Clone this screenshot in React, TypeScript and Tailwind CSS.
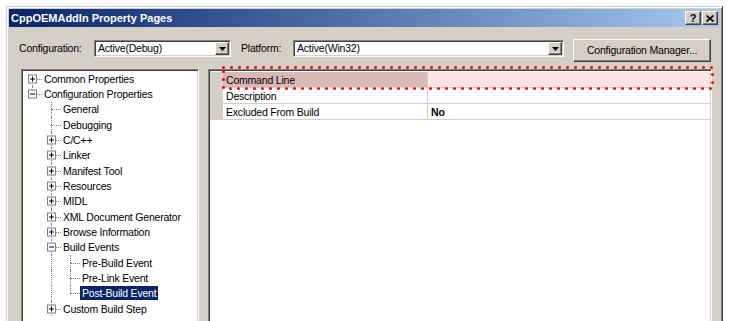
import React from 'react';

type TreeItem = {
  label: string;
  level: number;
  box?: 'plus' | 'minus';
  hasNext: boolean;
  first?: boolean;
  guides: boolean[];
  selected?: boolean;
};

const treeItems: TreeItem[] = [
  { label: 'Common Properties', level: 0, box: 'plus', hasNext: true, first: true, guides: [] },
  { label: 'Configuration Properties', level: 0, box: 'minus', hasNext: false, guides: [] },
  { label: 'General', level: 1, hasNext: true, guides: [false] },
  { label: 'Debugging', level: 1, hasNext: true, guides: [false] },
  { label: 'C/C++', level: 1, box: 'plus', hasNext: true, guides: [false] },
  { label: 'Linker', level: 1, box: 'plus', hasNext: true, guides: [false] },
  { label: 'Manifest Tool', level: 1, box: 'plus', hasNext: true, guides: [false] },
  { label: 'Resources', level: 1, box: 'plus', hasNext: true, guides: [false] },
  { label: 'MIDL', level: 1, box: 'plus', hasNext: true, guides: [false] },
  { label: 'XML Document Generator', level: 1, box: 'plus', hasNext: true, guides: [false] },
  { label: 'Browse Information', level: 1, box: 'plus', hasNext: true, guides: [false] },
  { label: 'Build Events', level: 1, box: 'minus', hasNext: true, guides: [false] },
  { label: 'Pre-Build Event', level: 2, hasNext: true, guides: [false, true] },
  { label: 'Pre-Link Event', level: 2, hasNext: true, guides: [false, true] },
  { label: 'Post-Build Event', level: 2, hasNext: false, guides: [false, true], selected: true },
  { label: 'Custom Build Step', level: 1, box: 'plus', hasNext: true, guides: [false] },
];

const sunken =
  'border border-t-[#808080] border-l-[#808080] border-r-white border-b-white shadow-[inset_1px_1px_0_#404040,inset_-1px_-1px_0_#d4d0c8]';
const raised =
  'border border-t-white border-l-white border-r-[#404040] border-b-[#404040] shadow-[inset_-1px_-1px_0_#808080]';

function ExpandBox({ kind }: { kind: 'plus' | 'minus' }) {
  return (
    <div className="absolute left-[5px] top-1/2 -translate-y-1/2 w-[9px] h-[9px] border border-[#808080] bg-white">
      <div className="absolute left-[1px] top-[3px] w-[5px] h-[1px] bg-black" />
      {kind === 'plus' && <div className="absolute left-[3px] top-[1px] w-[1px] h-[5px] bg-black" />}
    </div>
  );
}

function TreeRow({ item }: { item: TreeItem }) {
  return (
    <div className="flex items-center h-[15.33px]">
      {item.guides.map((g, i) => (
        <div key={i} className="relative w-[19px] h-full shrink-0">
          {g && <div className="absolute left-[9px] top-0 bottom-0 border-l border-dotted border-[#808080]" />}
        </div>
      ))}
      <div className="relative w-[19px] h-full shrink-0">
        {!item.first && <div className="absolute left-[9px] top-0 h-1/2 border-l border-dotted border-[#808080]" />}
        {item.hasNext && <div className="absolute left-[9px] top-1/2 bottom-0 border-l border-dotted border-[#808080]" />}
        <div className="absolute left-[9px] right-0 top-1/2 border-t border-dotted border-[#808080]" />
        {item.box && <ExpandBox kind={item.box} />}
      </div>
      <span
        className={
          'px-[2px] h-[14px] leading-[14px] whitespace-nowrap ' +
          (item.selected ? 'bg-[#0a246a] text-white' : 'text-black')
        }
      >
        {item.label}
      </span>
    </div>
  );
}

function Combo({ value, width }: { value: string; width: string }) {
  return (
    <div className={`${sunken} ${width} h-[17px] bg-white flex items-stretch p-[1px]`}>
      <div className="flex-1 pl-[2px] leading-[13px] text-black">{value}</div>
      <div className={`${raised} w-[14px] bg-[#d4d0c8] flex items-center justify-center`}>
        <svg width="7" height="4" viewBox="0 0 7 4">
          <path d="M0 0h7L3.5 4z" fill="#000" />
        </svg>
      </div>
    </div>
  );
}

function PropRow({ name, value, highlight, bold }: { name: string; value?: string; highlight?: boolean; bold?: boolean }) {
  return (
    <div className="flex h-[16px]">
      <div className="w-[13px] bg-[#d4d0c8] shrink-0" />
      <div
        className={
          'w-[205px] shrink-0 pl-[3px] leading-[16px] border-b border-r border-[#d4d0c8] ' +
          (highlight ? 'bg-[#d9b9b5]' : 'bg-white')
        }
      >
        {name}
      </div>
      <div
        className={
          'flex-1 pl-[3px] leading-[16px] border-b border-[#d4d0c8] ' +
          (highlight ? 'bg-[#ffe4e4]' : 'bg-white') +
          (bold ? ' font-bold' : '')
        }
      >
        {value}
      </div>
    </div>
  );
}

export default function App() {
  return (
    <div
      className="h-[321px] w-[729px] overflow-hidden bg-white text-[10.5px] tracking-[-0.2px] text-black"
      style={{ fontFamily: '"Liberation Sans", Arial, sans-serif' }}
    >
      <div className="ml-[6px] mt-[6px] w-[717px] h-[340px] bg-[#d4d0c8] p-[2px] border border-t-[#d4d0c8] border-l-[#d4d0c8] border-r-[#404040] border-b-[#404040] shadow-[inset_1px_1px_0_white,inset_-1px_-1px_0_#808080]">
        {/* title bar */}
        <div className="h-[18px] bg-linear-to-r from-[#0a246a] to-[#a6caf0] flex items-center pl-[2px] pr-[2px]">
          <span className="flex-1 font-bold text-white text-[11px] tracking-normal">CppOEMAddIn Property Pages</span>
          <div className="flex gap-[1px]">
            <div className={`${raised} w-[16px] h-[14px] bg-[#d4d0c8] flex items-center justify-center font-bold text-[11px] leading-none`}>
              ?
            </div>
            <div className={`${raised} w-[16px] h-[14px] bg-[#d4d0c8] flex items-center justify-center`}>
              <svg width="8" height="7" viewBox="0 0 8 7">
                <path d="M0.5 0.5L7.5 6.5M7.5 0.5L0.5 6.5" stroke="#000" strokeWidth="1.6" />
              </svg>
            </div>
          </div>
        </div>

        {/* configuration row */}
        <div className="flex items-start mt-[12px] pl-[10px]">
          <div className="w-[75px] h-[17px] mt-[1px] flex items-center">Configuration:</div>
          <div className="mt-[1px]">
            <Combo value="Active(Debug)" width="w-[137px]" />
          </div>
          <div className="ml-[10px] w-[52px] h-[17px] mt-[1px] flex items-center">Platform:</div>
          <div className="mt-[1px]">
            <Combo value="Active(Win32)" width="w-[271px]" />
          </div>
          <div className={`${raised} ml-[9px] w-[138px] h-[23px] bg-[#d4d0c8] flex items-center justify-center`}>
            Configuration Manager...
          </div>
        </div>

        {/* panels */}
        <div className="relative flex mt-[7px] pl-[12px]">
          <div className={`${sunken} w-[178px] h-[260px] bg-white p-[1px] overflow-hidden`}>
            {treeItems.map((item) => (
              <TreeRow key={item.label} item={item} />
            ))}
          </div>
          <div className={`${sunken} ml-[9px] w-[504px] h-[260px] bg-white p-[1px] pt-[2px]`}>
            <PropRow name="Command Line" highlight />
            <PropRow name="Description" />
            <PropRow name="Excluded From Build" value="No" bold />
          </div>
          {/* red annotation box */}
          <svg className="absolute left-[213px] top-[-3px]" width="492" height="24" viewBox="0 0 492 24">
            <rect
              x="1.5"
              y="1.5"
              width="489"
              height="21"
              fill="none"
              stroke="#ff0000"
              strokeWidth="3"
              strokeLinecap="round"
              strokeDasharray="0 8"
            />
          </svg>
        </div>
      </div>
    </div>
  );
}
